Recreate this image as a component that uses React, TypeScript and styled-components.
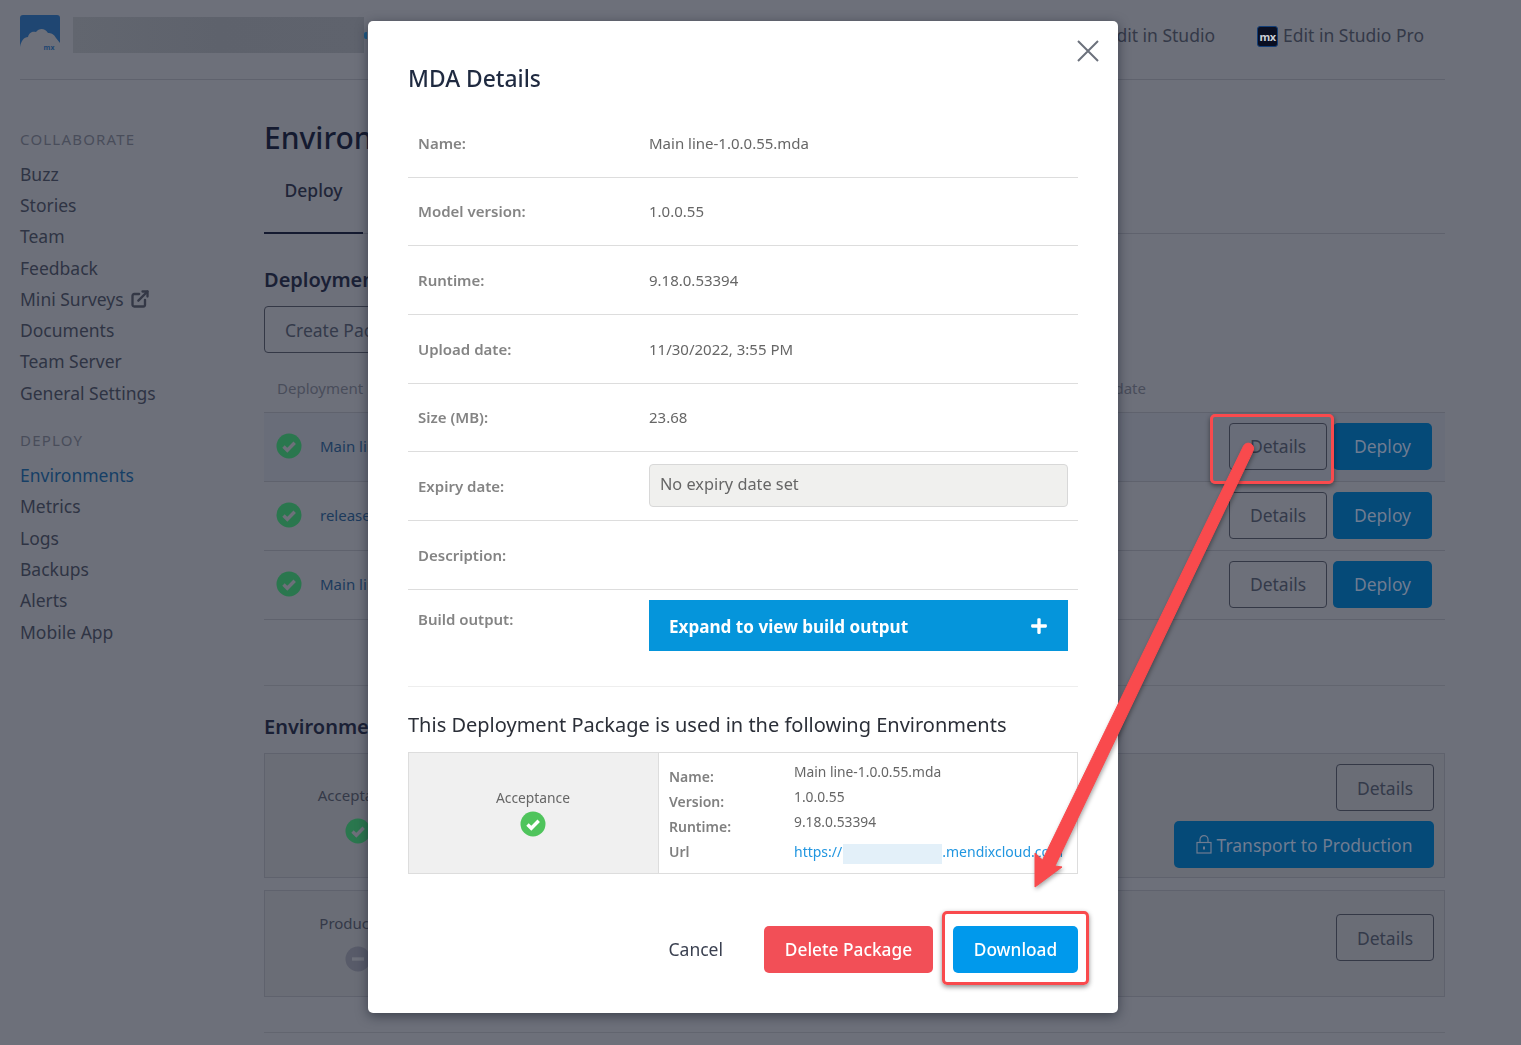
import React from 'react';
import styled, { createGlobalStyle } from 'styled-components';
import { ExternalLink } from 'lucide-react';
import { FaPlus } from 'react-icons/fa';

const GlobalStyle = createGlobalStyle`
  html, body {
    margin: 0;
    padding: 0;
    height: 100%;
    overflow: hidden;
    background: #6d707a;
  }
  body {
    font-family: "Noto Sans", "Open Sans", sans-serif;
    color: #2f3444;
  }
  * {
    box-sizing: border-box;
  }
`;

const collaborate = ['Buzz', 'Stories', 'Team', 'Feedback', 'Mini Surveys', 'Documents', 'Team Server', 'General Settings'];
const deploy = ['Environments', 'Metrics', 'Logs', 'Backups', 'Alerts', 'Mobile App'];
const packages = ['Main line-1.0.0.55.mda', 'release-1.0.0.54.mda', 'Main line-1.0.0.53.mda'];
const details = [
  { label: 'Name:', value: 'Main line-1.0.0.55.mda' },
  { label: 'Model version:', value: '1.0.0.55' },
  { label: 'Runtime:', value: '9.18.0.53394' },
  { label: 'Upload date:', value: '11/30/2022, 3:55 PM' },
  { label: 'Size (MB):', value: '23.68' },
];

function StatusCheck({ dim }: { dim?: boolean }) {
  return (
    <svg width="26" height="26" viewBox="0 0 26 26">
      <circle cx="13" cy="13" r="12.5" fill={dim ? '#2a774e' : '#4fc45c'} />
      <path d="M7.5 13.5l3.8 3.8 7.4-7.6" fill="none" stroke={dim ? '#6d707a' : '#fff'} strokeWidth="3.4" />
    </svg>
  );
}

function StatusMinus() {
  return (
    <svg width="26" height="26" viewBox="0 0 26 26">
      <circle cx="13" cy="13" r="12.5" fill="#585b69" />
      <path d="M7 13h12" stroke="#6d707a" strokeWidth="3.4" />
    </svg>
  );
}

function Logo() {
  return (
    <svg width="40" height="36" viewBox="0 0 40 36">
      <path d="M0 3a3 3 0 0 1 3-3h34a3 3 0 0 1 3 3v25L36 23c-2-4-5-5-8-5-3-5-9-5-12-1-3-1-7 0-8 5-4 0-7 4-8 10z" fill="#1f4672" />
      <text x="29" y="35" fontSize="7" fontWeight="700" textAnchor="middle" fill="#1f4672" fontFamily="Noto Sans, sans-serif">mx</text>
    </svg>
  );
}

function LockIcon() {
  return (
    <svg width="16" height="19" viewBox="0 0 16 19" fill="none" stroke="#6f7c91" strokeWidth="1.2">
      <rect x="1" y="7.5" width="14" height="10.5" />
      <path d="M4 7.5V4.6a4 4 0 0 1 8 0v2.9" />
      <path d="M8 11.5v3" strokeWidth="2" />
    </svg>
  );
}

export default function App() {
  return (
    <>
      <GlobalStyle />
      <Page>
        <TopBar>
          <Logo />
          <ProjectName />
          <BranchMark />
          <StudioLinks>
            <StudioLink>Edit in Studio</StudioLink>
            <StudioLink>
              <MxBadge>mx</MxBadge>
              Edit in Studio Pro
            </StudioLink>
          </StudioLinks>
        </TopBar>
        <Body>
          <Sidebar>
            <NavHeading>COLLABORATE</NavHeading>
            {collaborate.map((item) => (
              <NavItem key={item}>
                {item}
                {item === 'Mini Surveys' && <ExternalLink size={20} strokeWidth={2.8} color="#343846" />}
              </NavItem>
            ))}
            <NavHeading $second>DEPLOY</NavHeading>
            {deploy.map((item) => (
              <NavItem key={item} $active={item === 'Environments'}>
                {item}
              </NavItem>
            ))}
          </Sidebar>
          <Main>
            <PageTitle>Environments</PageTitle>
            <Tabs>
              <Tab>Deploy</Tab>
            </Tabs>
            <SectionTitle>Deployment Package Repository</SectionTitle>
            <OutlineButton $wide>Create Package</OutlineButton>
            <TableHead>
              <span>Deployment Package</span>
              <span>Upload date</span>
            </TableHead>
            {packages.map((name, i) => (
              <PackageRow key={name} $selected={i === 0}>
                <StatusCheck dim />
                <PackageName>{name}</PackageName>
                <RowActions>
                  <OutlineButton>Details</OutlineButton>
                  <DeployButton>Deploy</DeployButton>
                </RowActions>
              </PackageRow>
            ))}
            <EnvironmentsSection>
              <EnvironmentsTitle>Environments</EnvironmentsTitle>
              <EnvCard>
                <EnvName>
                  Acceptance
                  <StatusCheck dim />
                </EnvName>
                <EnvActions>
                  <OutlineButton>Details</OutlineButton>
                  <TransportButton>
                    <LockIcon />
                    Transport to Production
                  </TransportButton>
                </EnvActions>
              </EnvCard>
              <EnvCard $short>
                <EnvName>
                  Production
                  <StatusMinus />
                </EnvName>
                <EnvActions $single>
                  <OutlineButton>Details</OutlineButton>
                </EnvActions>
              </EnvCard>
            </EnvironmentsSection>
          </Main>
        </Body>
      </Page>

      <Modal>
        <CloseButton aria-label="Close">
          <svg width="22" height="22" viewBox="0 0 22 22">
            <path d="M1 1l20 20M21 1L1 21" stroke="#6c717c" strokeWidth="2" />
          </svg>
        </CloseButton>
        <ModalTitle>MDA Details</ModalTitle>
        {details.map((row) => (
          <DetailRow key={row.label}>
            <DetailLabel>{row.label}</DetailLabel>
            <DetailValue>{row.value}</DetailValue>
          </DetailRow>
        ))}
        <DetailRow>
          <DetailLabel>Expiry date:</DetailLabel>
          <ExpiryInput>No expiry date set</ExpiryInput>
        </DetailRow>
        <DetailRow>
          <DetailLabel>Description:</DetailLabel>
        </DetailRow>
        <BuildRow>
          <BuildLabel>Build output:</BuildLabel>
          <BuildPanel>
            Expand to view build output
            <FaPlus size={18} />
          </BuildPanel>
        </BuildRow>
        <UsedTitle>This Deployment Package is used in the following Environments</UsedTitle>
        <UsedTable>
          <UsedEnv>
            Acceptance
            <StatusCheck />
          </UsedEnv>
          <UsedInfo>
            <InfoRow>
              <InfoLabel>Name:</InfoLabel>
              <InfoValue>Main line-1.0.0.55.mda</InfoValue>
            </InfoRow>
            <InfoRow>
              <InfoLabel>Version:</InfoLabel>
              <InfoValue>1.0.0.55</InfoValue>
            </InfoRow>
            <InfoRow>
              <InfoLabel>Runtime:</InfoLabel>
              <InfoValue>9.18.0.53394</InfoValue>
            </InfoRow>
            <InfoRow>
              <InfoLabel>Url</InfoLabel>
              <UrlValue>
                https://
                <UrlMask />
                .mendixcloud.com
              </UrlValue>
            </InfoRow>
          </UsedInfo>
        </UsedTable>
        <ModalFooter>
          <CancelButton>Cancel</CancelButton>
          <DeleteButton>Delete Package</DeleteButton>
          <DownloadButton>Download</DownloadButton>
        </ModalFooter>
      </Modal>

      <DetailsHighlight />
      <DownloadHighlight />
      <ArrowLayer width="1521" height="1045" viewBox="0 0 1521 1045">
        <path
          d="M1253 451L1055 866 1062 867 1035 887 1035 853 1042.5 860 1243.5 446 a5 5 0 0 1 9.5 5z"
          fill="#f94a4d"
          stroke="#f94a4d"
          strokeWidth="1"
          strokeLinejoin="round"
        />
      </ArrowLayer>
    </>
  );
}

const Page = styled.div`
  width: 1521px;
  height: 1045px;
  padding: 0 76px 0 20px;
  overflow: hidden;
`;

const TopBar = styled.header`
  display: flex;
  align-items: flex-start;
  gap: 13px;
  height: 80px;
  padding-top: 15px;
  border-bottom: 1px solid #5f626d;
`;

const ProjectName = styled.div`
  width: 291px;
  height: 36px;
  margin-top: 2px;
  background: linear-gradient(90deg, #62666f, #5e626c 50%, #5f636d);
`;

const BranchMark = styled.span`
  width: 3px;
  height: 7px;
  margin: 17px 0 0 -13px;
  border-radius: 2px 0 0 2px;
  background: #1c5a86;
`;

const StudioLinks = styled.div`
  display: flex;
  gap: 42px;
  margin-left: auto;
  padding: 8px 21px 0 0;
`;

const StudioLink = styled.a`
  display: flex;
  align-items: center;
  gap: 5px;
  font-size: 17.5px;
  line-height: 24px;
  color: #343948;
`;

const MxBadge = styled.span`
  display: inline-flex;
  align-items: center;
  justify-content: center;
  width: 21px;
  height: 21px;
  margin-top: 3px;
  border: 1.5px solid #123e78;
  border-radius: 3px;
  background: #0a0f22;
  color: #c9cdd6;
  font-size: 11px;
  font-weight: 700;
  letter-spacing: -0.5px;
`;

const Body = styled.div`
  display: flex;
`;

const Sidebar = styled.nav`
  flex: 0 0 244px;
  padding-top: 49px;
`;

const NavHeading = styled.div<{ $second?: boolean }>`
  height: 20px;
  margin: ${({ $second }) => ($second ? '22px 0 9px' : '0 0 9px')};
  font-size: 15px;
  line-height: 20px;
  letter-spacing: 1.2px;
  color: #494d5a;
`;

const NavItem = styled.a<{ $active?: boolean }>`
  display: flex;
  align-items: center;
  gap: 6px;
  height: 31.3px;
  font-size: 17.5px;
  color: ${({ $active }) => ($active ? '#163f66' : '#2f3444')};
`;

const Main = styled.main`
  flex: 1;
  min-width: 0;
  padding-top: 38px;
`;

const PageTitle = styled.h1`
  margin: 0;
  font-size: 30px;
  line-height: 40px;
  font-weight: 500;
  color: #141a30;
`;

const Tabs = styled.div`
  display: flex;
  height: 76px;
  border-bottom: 1px solid #5f626d;
`;

const Tab = styled.div`
  width: 99px;
  height: 76px;
  padding-top: 20px;
  border-bottom: 2px solid #141a30;
  text-align: center;
  font-size: 17.5px;
  line-height: 24px;
  font-weight: 500;
  color: #1f2538;
`;

const SectionTitle = styled.h2`
  margin: 32px 0 12px;
  font-size: 20px;
  line-height: 28px;
  font-weight: 600;
  color: #1a2035;
`;

const OutlineButton = styled.button<{ $wide?: boolean }>`
  width: ${({ $wide }) => ($wide ? '180px' : '98px')};
  height: 47px;
  padding: ${({ $wide }) => ($wide ? '0 20px' : '0')};
  border: 1px solid #343846;
  border-radius: 4px;
  background: transparent;
  text-align: ${({ $wide }) => ($wide ? 'left' : 'center')};
  font: inherit;
  font-size: 17.5px;
  color: #343a4a;
`;

const TableHead = styled.div`
  display: flex;
  justify-content: space-between;
  height: 60px;
  padding: 24px 299px 0 13px;
  border-bottom: 1px solid #5f626d;
  font-size: 15px;
  line-height: 22px;
  color: #494d5a;
`;

const PackageRow = styled.div<{ $selected?: boolean }>`
  display: flex;
  align-items: center;
  height: 69px;
  padding: 0 13px 2px 12px;
  border-bottom: 1px solid #5f626d;
  background: ${({ $selected }) => ($selected ? '#696d79' : 'transparent')};
`;

const PackageName = styled.a`
  margin-left: 18px;
  font-size: 15px;
  color: #1c3a5c;
`;

const RowActions = styled.div`
  display: flex;
  gap: 6px;
  margin-left: auto;
`;

const DeployButton = styled.button`
  width: 99px;
  height: 47px;
  border: 0;
  border-radius: 5px;
  background: #054a78;
  font: inherit;
  font-size: 17.5px;
  color: #6f7c91;
`;

const EnvironmentsSection = styled.section`
  margin-top: 65px;
  padding-top: 27px;
  border-top: 1px solid #62656f;
  height: 348px;
  border-bottom: 1px solid #62656f;
`;

const EnvironmentsTitle = styled.h2`
  margin: 0 0 12px;
  font-size: 20px;
  line-height: 28px;
  font-weight: 600;
  color: #1a2035;
`;

const EnvCard = styled.div<{ $short?: boolean }>`
  display: flex;
  height: ${({ $short }) => ($short ? '107px' : '125px')};
  margin-bottom: 12px;
  border: 1px solid #5f626d;
  background: #6a6d76;
`;

const EnvName = styled.div`
  display: flex;
  flex-direction: column;
  align-items: center;
  justify-content: center;
  gap: 12px;
  width: 186px;
  padding-bottom: 3px;
  font-size: 15px;
  line-height: 22px;
  color: #343948;
`;

const EnvActions = styled.div<{ $single?: boolean }>`
  display: flex;
  flex-direction: column;
  align-items: flex-end;
  gap: 10px;
  margin-left: auto;
  padding: ${({ $single }) => ($single ? '23px 10px 0 0' : '10px 10px 0 0')};
`;

const TransportButton = styled(DeployButton)`
  display: flex;
  align-items: center;
  justify-content: center;
  gap: 5px;
  width: 260px;
`;

const Modal = styled.div`
  position: fixed;
  top: 21px;
  left: 368px;
  width: 750px;
  height: 992px;
  padding: 0 40px;
  border-radius: 5px;
  background: #fff;
  box-shadow: 0 3px 12px rgba(20, 25, 40, 0.55);
  color: #777;
`;

const CloseButton = styled.button`
  position: absolute;
  top: 19px;
  right: 19px;
  display: flex;
  padding: 0;
  border: 0;
  background: none;
`;

const ModalTitle = styled.h3`
  height: 88px;
  margin: 0;
  padding-top: 43px;
  font-size: 22.8px;
  line-height: 30px;
  font-weight: 500;
  color: #1f2a40;
`;

const DetailRow = styled.div`
  display: grid;
  grid-template-columns: 241px 1fr;
  align-items: center;
  height: 68.67px;
  padding-bottom: 0.4px;
  border-bottom: 1px solid #ddd;
`;

const DetailLabel = styled.div`
  padding-left: 10px;
  font-size: 15px;
  font-weight: 600;
  color: #848484;
`;

const DetailValue = styled.div`
  font-size: 15px;
  color: #666;
`;

const ExpiryInput = styled.div`
  height: 43px;
  margin-right: 10px;
  padding: 0 10px;
  border: 1px solid #d8d8d8;
  border-radius: 4px;
  background: #f0f0ee;
  font-size: 16.3px;
  line-height: 38px;
  color: #666;
`;

const BuildRow = styled.div`
  display: grid;
  grid-template-columns: 241px 1fr;
  align-items: start;
  height: 97px;
  padding-top: 10px;
  border-bottom: 1px solid #eee;
`;

const BuildLabel = styled(DetailLabel)`
  padding-top: 9px;
`;

const BuildPanel = styled.div`
  display: flex;
  align-items: center;
  justify-content: space-between;
  height: 51px;
  margin-right: 10px;
  padding: 2px 20px 0;
  background: #0595db;
  font-size: 17.1px;
  font-weight: 700;
  color: #fff;
`;

const UsedTitle = styled.h4`
  margin: 24px 0 13px;
  font-size: 20px;
  line-height: 28px;
  font-weight: 400;
  color: #2b2f38;
`;

const UsedTable = styled.div`
  display: flex;
  height: 122px;
  border: 1px solid #ddd;
`;

const UsedEnv = styled.div`
  display: flex;
  flex-direction: column;
  align-items: center;
  gap: 2px;
  flex: 0 0 250px;
  padding: 34px 1px 0 0;
  border-right: 1px solid #ddd;
  background: #f0f0f0;
  font-size: 13.8px;
  line-height: 22px;
  color: #666;
`;

const UsedInfo = styled.div`
  flex: 1;
  padding: 7px 0 0 10px;
`;

const InfoRow = styled.div`
  display: grid;
  grid-template-columns: 125px 1fr;
  align-items: start;
  height: 25px;
`;

const InfoLabel = styled.div`
  margin-top: 7px;
  font-size: 14px;
  line-height: 20px;
  font-weight: 600;
  color: #808080;
`;

const InfoValue = styled.div`
  font-size: 13.8px;
  line-height: 24px;
  color: #666;
`;

const UrlValue = styled.a`
  display: flex;
  align-items: center;
  height: 20px;
  margin-top: 7px;
  font-size: 14px;
  color: #2196e0;
  white-space: nowrap;
`;

const UrlMask = styled.span`
  position: relative;
  top: 2px;
  flex: 0 0 99px;
  height: 20px;
  margin-left: 1px;
  background: #e3f0f9;
`;

const ModalFooter = styled.div`
  display: flex;
  justify-content: flex-end;
  gap: 20px;
  margin-top: 52px;
`;

const FooterButton = styled.button`
  height: 47px;
  border: 0;
  border-radius: 5px;
  font: inherit;
  font-size: 17.3px;
  font-weight: 500;
  color: #fff;
`;

const CancelButton = styled(FooterButton)`
  padding: 0 21px;
  background: none;
  font-size: 17.5px;
  font-weight: 400;
  color: #3a4050;
`;

const DeleteButton = styled(FooterButton)`
  width: 169px;
  background: #f24f57;
`;

const DownloadButton = styled(FooterButton)`
  width: 125px;
  background: #0099ec;
`;

const Highlight = styled.div`
  position: fixed;
  border: 3.5px solid #f94a4d;
  border-radius: 5px;
  box-shadow: 0 2px 5px rgba(0, 0, 0, 0.45);
`;

const DetailsHighlight = styled(Highlight)`
  top: 414px;
  left: 1210px;
  width: 124px;
  height: 70px;
`;

const DownloadHighlight = styled(Highlight)`
  top: 911px;
  left: 942px;
  width: 147px;
  height: 74px;
`;

const ArrowLayer = styled.svg`
  position: fixed;
  top: 0;
  left: 0;
  pointer-events: none;
  filter: drop-shadow(1px 2px 2px rgba(0, 0, 0, 0.35));
`;
